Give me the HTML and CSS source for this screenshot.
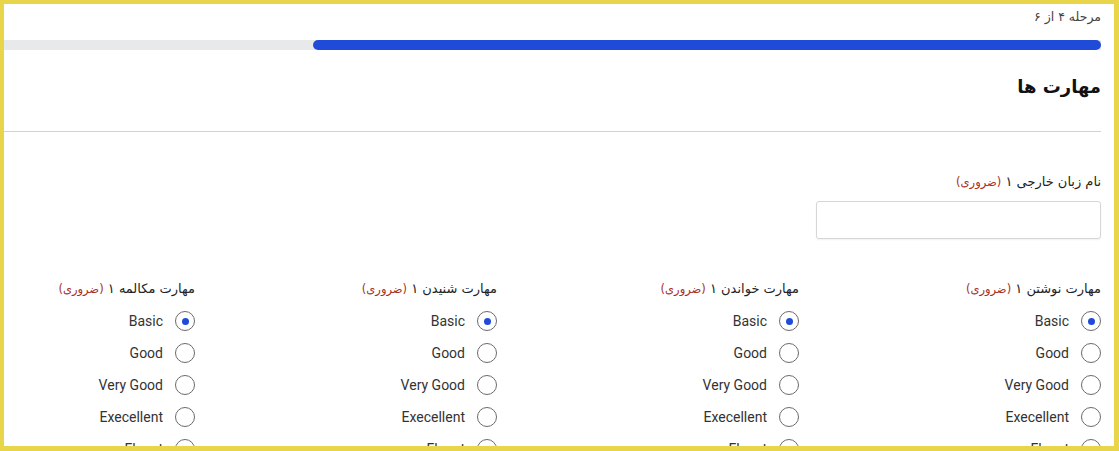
FILE: index.html
```html
<!DOCTYPE html>
<html lang="fa" dir="rtl">
<head>
<meta charset="utf-8">
<title>مهارت ها</title>
<link rel="stylesheet" href="styles.css">
</head>
<body>
<div class="frame">
  <div class="page">
    <div class="step">مرحله ۴ از ۶</div>
    <div class="track"><div class="fill" style="width: 71.8%"></div></div>
    <h2 class="title">مهارت ها</h2>
    <hr class="sep">
    <div class="field">
      <label class="label">نام زبان خارجی ۱ <span class="req">(ضروری)</span></label>
      <input class="input" type="text">
    </div>
    <div class="skills">
      <div class="col">
        <div class="label">مهارت نوشتن ۱ <span class="req">(ضروری)</span></div>
        <ul class="radios">
          <li class="opt"><span class="circle on"></span><span class="txt">Basic</span></li>
          <li class="opt"><span class="circle"></span><span class="txt">Good</span></li>
          <li class="opt"><span class="circle"></span><span class="txt">Very Good</span></li>
          <li class="opt"><span class="circle"></span><span class="txt">Execellent</span></li>
          <li class="opt"><span class="circle"></span><span class="txt">Fluent</span></li>
        </ul>
      </div>
      <div class="col">
        <div class="label">مهارت خواندن ۱ <span class="req">(ضروری)</span></div>
        <ul class="radios">
          <li class="opt"><span class="circle on"></span><span class="txt">Basic</span></li>
          <li class="opt"><span class="circle"></span><span class="txt">Good</span></li>
          <li class="opt"><span class="circle"></span><span class="txt">Very Good</span></li>
          <li class="opt"><span class="circle"></span><span class="txt">Execellent</span></li>
          <li class="opt"><span class="circle"></span><span class="txt">Fluent</span></li>
        </ul>
      </div>
      <div class="col">
        <div class="label">مهارت شنیدن ۱ <span class="req">(ضروری)</span></div>
        <ul class="radios">
          <li class="opt"><span class="circle on"></span><span class="txt">Basic</span></li>
          <li class="opt"><span class="circle"></span><span class="txt">Good</span></li>
          <li class="opt"><span class="circle"></span><span class="txt">Very Good</span></li>
          <li class="opt"><span class="circle"></span><span class="txt">Execellent</span></li>
          <li class="opt"><span class="circle"></span><span class="txt">Fluent</span></li>
        </ul>
      </div>
      <div class="col">
        <div class="label">مهارت مکالمه ۱ <span class="req">(ضروری)</span></div>
        <ul class="radios">
          <li class="opt"><span class="circle on"></span><span class="txt">Basic</span></li>
          <li class="opt"><span class="circle"></span><span class="txt">Good</span></li>
          <li class="opt"><span class="circle"></span><span class="txt">Very Good</span></li>
          <li class="opt"><span class="circle"></span><span class="txt">Execellent</span></li>
          <li class="opt"><span class="circle"></span><span class="txt">Fluent</span></li>
        </ul>
      </div>
    </div>
  </div>
</div>
</body>
</html>
```
FILE: styles.css
```css
html, body {
  margin: 0;
  padding: 0;
}
body {
  width: 1119px;
  height: 451px;
  overflow: hidden;
  background: #e9d54a;
}
.frame {
  box-sizing: border-box;
  width: 1119px;
  height: 451px;
  border-style: solid;
  border-color: #e9d54a;
  border-width: 4px 5px 5px 4px;
  background: #ffffff;
  overflow: hidden;
}
.page {
  direction: rtl;
  padding: 0 13px 0 0;
  font-family: "DejaVu Sans", sans-serif;
  color: #222;
}
.step {
  font-size: 12.5px;
  line-height: 18px;
  padding-top: 4px;
  color: #444;
}
.track {
  margin-top: 14px;
  height: 10px;
  background: #e8e9ea;
}
.fill {
  height: 10px;
  background: #1f4bd8;
  border-radius: 5px;
}
.title {
  margin: 25px 0 0 0;
  font-size: 18px;
  line-height: 24px;
  font-weight: bold;
  color: #111;
}
.sep {
  margin: 32px 0 0 0;
  border: 0;
  border-top: 1px solid #d2d2d2;
  height: 0;
}
.field {
  padding-top: 40px;
  display: flex;
  flex-direction: column;
  align-items: flex-start;
}
.label {
  font-size: 13px;
  line-height: 20px;
  color: #222;
}
.req {
  color: #a8301e;
  font-size: 11.5px;
}
.input {
  margin-top: 9px;
  box-sizing: border-box;
  width: 285px;
  height: 38px;
  border: 1px solid #d6d6d6;
  border-radius: 3px;
  box-shadow: 0 1px 2px rgba(0,0,0,0.06);
  background: #fff;
}
.skills {
  margin-top: 40px;
  display: grid;
  grid-template-columns: repeat(4, 286px);
  column-gap: 16px;
}
.col {
  display: flex;
  flex-direction: column;
  align-items: flex-start;
}
.radios {
  list-style: none;
  margin: 6px 0 0 0;
  padding: 0;
}
.opt {
  display: flex;
  align-items: center;
  gap: 12px;
  height: 32px;
  font-family: Roboto, "Liberation Sans", sans-serif;
  font-size: 14px;
  color: #333;
}
.circle {
  box-sizing: border-box;
  width: 20px;
  height: 20px;
  border: 1.5px solid #6b6b6b;
  border-radius: 50%;
  display: flex;
  align-items: center;
  justify-content: center;
}
.circle.on::after {
  content: "";
  width: 7px;
  height: 7px;
  border-radius: 50%;
  background: #1f4bd8;
}
```
